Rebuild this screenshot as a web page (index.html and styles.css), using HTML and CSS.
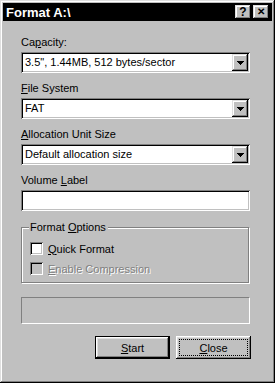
FILE: index.html
```html
<!DOCTYPE html>
<html lang="en">
<head>
    <meta charset="UTF-8">
    <title>Format A:\</title>
    <link rel="stylesheet" href="styles.css">
</head>
<body>

    <div class="window">
        <!-- Title bar -->
        <div class="titlebar">
            <span class="title">Format A:\</span>
            <span class="title-btn">?</span>
            <span class="title-btn close-x">&#x2715;</span>
        </div>

        <div class="content">
            <label class="field-label">Ca<u>p</u>acity:</label>
            <div class="combo">
                <span class="value">3.5&quot;, 1.44MB, 512 bytes/sector</span>
                <span class="drop"><svg width="7" height="4"><path d="M0 0h7v1h-1v1h-1v1h-1v1h-1v-1h-1v-1h-1v-1h-1z"/></svg></span>
            </div>

            <label class="field-label"><u>F</u>ile System</label>
            <div class="combo">
                <span class="value">FAT</span>
                <span class="drop"><svg width="7" height="4"><path d="M0 0h7v1h-1v1h-1v1h-1v1h-1v-1h-1v-1h-1v-1h-1z"/></svg></span>
            </div>

            <label class="field-label"><u>A</u>llocation Unit Size</label>
            <div class="combo">
                <span class="value">Default allocation size</span>
                <span class="drop"><svg width="7" height="4"><path d="M0 0h7v1h-1v1h-1v1h-1v1h-1v-1h-1v-1h-1v-1h-1z"/></svg></span>
            </div>

            <label class="field-label">Volume <u>L</u>abel</label>
            <div class="textbox"></div>

            <!-- Format options group -->
            <div class="group">
                <span class="group-label">Format <u>O</u>ptions</span>
                <div class="check-row">
                    <span class="checkbox"></span>
                    <span><u>Q</u>uick Format</span>
                </div>
                <div class="check-row disabled">
                    <span class="checkbox"></span>
                    <span><u>E</u>nable Compression</span>
                </div>
            </div>

            <div class="progress"></div>

            <div class="buttons">
                <button class="btn default"><u>S</u>tart</button>
                <button class="btn"><span class="focus"><u>C</u>lose</span></button>
            </div>
        </div>
    </div>

</body>
</html>
```

FILE: styles.css
```css
body {
    margin: 0;
    font-family: "Liberation Sans", Arial, sans-serif;
    font-size: 11px;
    background: #c0c0c0;
}
.window {
    width: 275px;
    height: 383px;
    box-sizing: border-box;
    padding: 3px;
    background: #c0c0c0;
    box-shadow: inset -1px -1px #000, inset 1px 1px #dfdfdf, inset -2px -2px #808080, inset 2px 2px #fff;
}
.titlebar {
    height: 18px;
    background: #000;
    color: #fff;
    display: flex;
    align-items: center;
    padding: 0 3px 0 3px;
}
.title {
    flex: 1;
    font-weight: bold;
    font-size: 13px;
}
.title-btn {
    width: 16px;
    height: 14px;
    box-sizing: border-box;
    margin-left: 2px;
    background: #c0c0c0;
    color: #000;
    font-weight: bold;
    font-size: 12px;
    line-height: 14px;
    text-align: center;
    box-shadow: inset -1px -1px #000, inset 1px 1px #dfdfdf, inset -2px -2px #808080, inset 2px 2px #fff;
}
.close-x {
    font-size: 10px;
}
.content {
    padding: 15px 0 0 18px;
    width: 229px;
}
.field-label {
    display: block;
    line-height: 13px;
    margin-bottom: 3px;
}
.combo, .textbox {
    height: 21px;
    box-sizing: border-box;
    padding: 2px;
    background: #fff;
    display: flex;
    margin-bottom: 9px;
    box-shadow: inset 1px 1px #808080, inset -1px -1px #fff, inset 2px 2px #000, inset -2px -2px #c0c0c0;
}
.value {
    flex: 1;
    padding-left: 2px;
    line-height: 17px;
}
.drop {
    width: 16px;
    height: 17px;
    background: #c0c0c0;
    display: flex;
    align-items: center;
    justify-content: center;
    box-shadow: inset -1px -1px #000, inset 1px 1px #dfdfdf, inset -2px -2px #808080, inset 2px 2px #fff;
}
.textbox {
    margin-bottom: 16px;
}
.group {
    position: relative;
    height: 56px;
    border: 1px solid #808080;
    box-shadow: inset 1px 1px #fff, 1px 1px 0 #fff;
    padding: 14px 0 0 8px;
    box-sizing: border-box;
    width: 228px;
}
.group-label {
    position: absolute;
    top: -7px;
    left: 7px;
    padding: 0 2px 0 1px;
    line-height: 13px;
    background: #c0c0c0;
}
.check-row {
    display: flex;
    align-items: center;
    height: 13px;
    margin-bottom: 7px;
}
.checkbox {
    width: 13px;
    height: 13px;
    box-sizing: border-box;
    background: #fff;
    margin-right: 5px;
    box-shadow: inset 1px 1px #808080, inset -1px -1px #fff, inset 2px 2px #000, inset -2px -2px #c0c0c0;
}
.disabled {
    color: #808080;
    text-shadow: 1px 1px 0 #fff;
}
.disabled .checkbox {
    background: #c0c0c0;
}
.progress {
    margin-top: 14px;
    height: 27px;
    box-sizing: border-box;
    border: 1px solid;
    border-color: #808080 #fff #fff #808080;
}
.buttons {
    display: flex;
    justify-content: flex-end;
    gap: 6px;
    margin-top: 12px;
    margin-right: -1px;
}
.btn {
    width: 75px;
    height: 23px;
    padding: 0;
    border: none;
    background: #c0c0c0;
    font-family: inherit;
    font-size: 11px;
    color: #000;
    box-shadow: inset -1px -1px #000, inset 1px 1px #fff, inset -2px -2px #808080, inset 2px 2px #dfdfdf;
    display: flex;
    align-items: center;
    justify-content: center;
}
.btn.default {
    border: 1px solid #000;
}
.focus {
    display: flex;
    align-items: center;
    justify-content: center;
    width: 67px;
    height: 15px;
    box-sizing: border-box;
    outline: 1px dotted #000;
}
```
